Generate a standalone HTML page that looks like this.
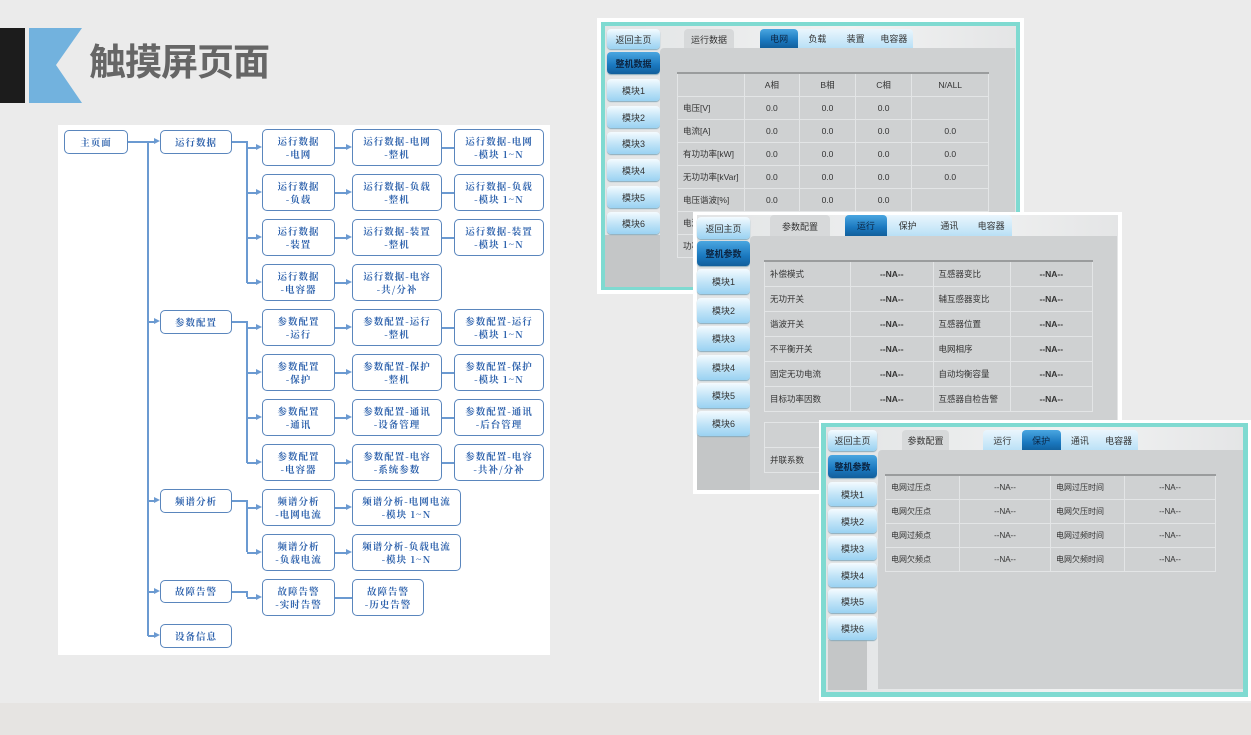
<!DOCTYPE html>
<html><head><meta charset="utf-8"><style>
*{margin:0;padding:0;box-sizing:border-box}
body{width:1251px;height:735px;background:#ebebeb;position:relative;overflow:hidden;font-family:"Liberation Sans","Noto Sans CJK SC",sans-serif}
.a{position:absolute}
.b{position:absolute;border:1.5px solid #5a86bd;border-radius:5px;background:#fff;color:#2f63ad;font-size:9.5px;font-weight:bold;text-align:center;display:flex;align-items:center;justify-content:center;line-height:13px;font-family:"Noto Serif CJK SC","Liberation Serif",serif;letter-spacing:1px}
.h{position:absolute;height:1.5px;background:#6b9ad1}
.v{position:absolute;width:1.5px;background:#6b9ad1}
.ar{position:absolute;width:0;height:0;border-left:6px solid #6b9ad1;border-top:3.5px solid transparent;border-bottom:3.5px solid transparent}
.sb{position:absolute;border-radius:4px;background:linear-gradient(#f4fbff,#bfe3f7 55%,#9ad2f2);color:#333;font-size:9px;display:flex;align-items:center;justify-content:center;box-shadow:0 1px 1px #8ab}
.dk{background:linear-gradient(#4aa6e0,#1a78bf 60%,#125f9c);color:#0c2440;font-weight:bold}
.tb{position:absolute;background:#d7d9da;border-radius:4px 4px 0 0;color:#333;font-size:9px;display:flex;align-items:center;justify-content:center}
.tg{position:absolute;display:flex;border-radius:4px 4px 0 0;background:linear-gradient(#eaf6fd,#b9e0f6)}
.tg span{flex:1;display:flex;align-items:center;justify-content:center;font-size:9px;color:#333}
.tg span.on{background:linear-gradient(#4aa6e0,#1a78bf 60%,#125f9c);color:#0c2440;border-radius:4px 4px 0 0}
table{position:absolute;border-collapse:collapse;font-size:8.5px;color:#333}
td{border:1.5px solid #e3e5e6;padding:0 5px;white-space:nowrap}
td.c{text-align:center}
</style></head><body>
<div class="a" style="left:0;top:703px;width:1251px;height:32px;background:#e6e4e2"></div>
<div class="a" style="left:0;top:28px;width:25px;height:75px;background:#1c1c1c"></div>
<svg class="a" style="left:29px;top:28px" width="60" height="75"><polygon points="0,0 53,0 27,37 53,75 0,75" fill="#72b2de"/></svg>
<div class="a" style="left:89px;top:40px;font-size:37px;font-weight:bold;color:#666;letter-spacing:-1px;line-height:46px">触摸屏页面</div>

<div class="a" style="left:58px;top:125px;width:492px;height:530px;background:#fff"></div>
<div class="b" style="left:64px;top:130px;width:64px;height:24px">主页面</div>
<div class="h" style="left:128px;top:141px;width:20px"></div>
<div class="v" style="left:147px;top:141px;height:495px"></div>
<div class="b" style="left:160px;top:130px;width:72px;height:24px">运行数据</div>
<div class="b" style="left:160px;top:310px;width:72px;height:24px">参数配置</div>
<div class="b" style="left:160px;top:489px;width:72px;height:24px">频谱分析</div>
<div class="b" style="left:160px;top:580px;width:72px;height:23px">故障告警</div>
<div class="b" style="left:160px;top:624px;width:72px;height:24px">设备信息</div>
<div class="h" style="left:148px;top:141px;width:8px"></div><div class="ar" style="left:154px;top:138px"></div>
<div class="h" style="left:148px;top:321px;width:8px"></div><div class="ar" style="left:154px;top:318px"></div>
<div class="h" style="left:148px;top:500px;width:8px"></div><div class="ar" style="left:154px;top:497px"></div>
<div class="h" style="left:148px;top:591px;width:8px"></div><div class="ar" style="left:154px;top:588px"></div>
<div class="h" style="left:148px;top:635px;width:8px"></div><div class="ar" style="left:154px;top:632px"></div>
<div class="h" style="left:232px;top:141px;width:16px"></div><div class="v" style="left:246px;top:141px;height:142px"></div>
<div class="h" style="left:232px;top:321px;width:16px"></div><div class="v" style="left:246px;top:321px;height:142px"></div>
<div class="h" style="left:232px;top:500px;width:16px"></div><div class="v" style="left:246px;top:500px;height:52px"></div>
<div class="h" style="left:232px;top:591px;width:16px"></div><div class="v" style="left:246px;top:591px;height:6px"></div>

<div class="h" style="left:247px;top:147px;width:10px"></div><div class="ar" style="left:256px;top:144px"></div>
<div class="b" style="left:262px;top:129px;width:73px;height:37px">运行数据<br>-电网</div>
<div class="h" style="left:335px;top:147px;width:12px"></div><div class="ar" style="left:346px;top:144px"></div>
<div class="b" style="left:352px;top:129px;width:90px;height:37px">运行数据-电网<br>-整机</div>
<div class="h" style="left:442px;top:147px;width:12px"></div>
<div class="b" style="left:454px;top:129px;width:90px;height:37px">运行数据-电网<br>-模块 1~N</div>

<div class="h" style="left:247px;top:192px;width:10px"></div><div class="ar" style="left:256px;top:189px"></div>
<div class="b" style="left:262px;top:174px;width:73px;height:37px">运行数据<br>-负载</div>
<div class="h" style="left:335px;top:192px;width:12px"></div><div class="ar" style="left:346px;top:189px"></div>
<div class="b" style="left:352px;top:174px;width:90px;height:37px">运行数据-负载<br>-整机</div>
<div class="h" style="left:442px;top:192px;width:12px"></div>
<div class="b" style="left:454px;top:174px;width:90px;height:37px">运行数据-负载<br>-模块 1~N</div>

<div class="h" style="left:247px;top:237px;width:10px"></div><div class="ar" style="left:256px;top:234px"></div>
<div class="b" style="left:262px;top:219px;width:73px;height:37px">运行数据<br>-装置</div>
<div class="h" style="left:335px;top:237px;width:12px"></div><div class="ar" style="left:346px;top:234px"></div>
<div class="b" style="left:352px;top:219px;width:90px;height:37px">运行数据-装置<br>-整机</div>
<div class="h" style="left:442px;top:237px;width:12px"></div>
<div class="b" style="left:454px;top:219px;width:90px;height:37px">运行数据-装置<br>-模块 1~N</div>

<div class="h" style="left:247px;top:282px;width:10px"></div><div class="ar" style="left:256px;top:279px"></div>
<div class="b" style="left:262px;top:264px;width:73px;height:37px">运行数据<br>-电容器</div>
<div class="h" style="left:335px;top:282px;width:12px"></div><div class="ar" style="left:346px;top:279px"></div>
<div class="b" style="left:352px;top:264px;width:90px;height:37px">运行数据-电容<br>-共/分补</div>

<div class="h" style="left:247px;top:327px;width:10px"></div><div class="ar" style="left:256px;top:324px"></div>
<div class="b" style="left:262px;top:309px;width:73px;height:37px">参数配置<br>-运行</div>
<div class="h" style="left:335px;top:327px;width:12px"></div><div class="ar" style="left:346px;top:324px"></div>
<div class="b" style="left:352px;top:309px;width:90px;height:37px">参数配置-运行<br>-整机</div>
<div class="h" style="left:442px;top:327px;width:12px"></div>
<div class="b" style="left:454px;top:309px;width:90px;height:37px">参数配置-运行<br>-模块 1~N</div>

<div class="h" style="left:247px;top:372px;width:10px"></div><div class="ar" style="left:256px;top:369px"></div>
<div class="b" style="left:262px;top:354px;width:73px;height:37px">参数配置<br>-保护</div>
<div class="h" style="left:335px;top:372px;width:12px"></div><div class="ar" style="left:346px;top:369px"></div>
<div class="b" style="left:352px;top:354px;width:90px;height:37px">参数配置-保护<br>-整机</div>
<div class="h" style="left:442px;top:372px;width:12px"></div>
<div class="b" style="left:454px;top:354px;width:90px;height:37px">参数配置-保护<br>-模块 1~N</div>

<div class="h" style="left:247px;top:417px;width:10px"></div><div class="ar" style="left:256px;top:414px"></div>
<div class="b" style="left:262px;top:399px;width:73px;height:37px">参数配置<br>-通讯</div>
<div class="h" style="left:335px;top:417px;width:12px"></div><div class="ar" style="left:346px;top:414px"></div>
<div class="b" style="left:352px;top:399px;width:90px;height:37px">参数配置-通讯<br>-设备管理</div>
<div class="h" style="left:442px;top:417px;width:12px"></div>
<div class="b" style="left:454px;top:399px;width:90px;height:37px">参数配置-通讯<br>-后台管理</div>

<div class="h" style="left:247px;top:462px;width:10px"></div><div class="ar" style="left:256px;top:459px"></div>
<div class="b" style="left:262px;top:444px;width:73px;height:37px">参数配置<br>-电容器</div>
<div class="h" style="left:335px;top:462px;width:12px"></div><div class="ar" style="left:346px;top:459px"></div>
<div class="b" style="left:352px;top:444px;width:90px;height:37px">参数配置-电容<br>-系统参数</div>
<div class="h" style="left:442px;top:462px;width:12px"></div>
<div class="b" style="left:454px;top:444px;width:90px;height:37px">参数配置-电容<br>-共补/分补</div>

<div class="h" style="left:247px;top:507px;width:10px"></div><div class="ar" style="left:256px;top:504px"></div>
<div class="b" style="left:262px;top:489px;width:73px;height:37px">频谱分析<br>-电网电流</div>
<div class="h" style="left:335px;top:507px;width:12px"></div><div class="ar" style="left:346px;top:504px"></div>
<div class="b" style="left:352px;top:489px;width:109px;height:37px">频谱分析-电网电流<br>-模块 1~N</div>

<div class="h" style="left:247px;top:552px;width:10px"></div><div class="ar" style="left:256px;top:549px"></div>
<div class="b" style="left:262px;top:534px;width:73px;height:37px">频谱分析<br>-负载电流</div>
<div class="h" style="left:335px;top:552px;width:12px"></div><div class="ar" style="left:346px;top:549px"></div>
<div class="b" style="left:352px;top:534px;width:109px;height:37px">频谱分析-负载电流<br>-模块 1~N</div>

<div class="h" style="left:247px;top:597px;width:10px"></div><div class="ar" style="left:256px;top:594px"></div>
<div class="b" style="left:262px;top:579px;width:73px;height:37px">故障告警<br>-实时告警</div>
<div class="h" style="left:335px;top:597px;width:17px"></div>
<div class="b" style="left:352px;top:579px;width:72px;height:37px">故障告警<br>-历史告警</div>

<!-- SCREEN 1 -->
<div class="a" style="left:597px;top:18px;width:427px;height:276px;background:#fff"></div>
<div class="a" style="left:601px;top:22px;width:419px;height:268px;background:#7fdad1"></div>
<div class="a" style="left:605px;top:26px;width:411px;height:261px;background:linear-gradient(90deg,#e2e4e5,#f2f3f3 60%,#e4e5e6)"></div>
<div class="a" style="left:605px;top:235px;width:55px;height:52px;background:#c4c6c7"></div>
<div class="sb" style="left:607px;top:29px;width:53px;height:20px">返回主页</div>
<div class="sb dk" style="left:607px;top:52px;width:53px;height:22px">整机数据</div>
<div class="sb" style="left:607px;top:79px;width:53px;height:22px">模块1</div>
<div class="sb" style="left:607px;top:106px;width:53px;height:22px">模块2</div>
<div class="sb" style="left:607px;top:132px;width:53px;height:22px">模块3</div>
<div class="sb" style="left:607px;top:159px;width:53px;height:22px">模块4</div>
<div class="sb" style="left:607px;top:186px;width:53px;height:22px">模块5</div>
<div class="sb" style="left:607px;top:212px;width:53px;height:22px">模块6</div>
<div class="tb" style="left:684px;top:29px;width:50px;height:20px">运行数据</div>
<div class="tg" style="left:760px;top:29px;width:153px;height:19px"><span class="on">电网</span><span>负载</span><span>装置</span><span>电容器</span></div>
<div class="a" style="left:660px;top:48px;width:355px;height:239px;background:#cfd1d2;border-radius:4px 0 0 0"></div>
<table style="left:677px;top:72px;width:312px;border-top:2px solid #9a9c9d">
<tr style="height:23px"><td style="width:62px"></td><td class="c">A相</td><td class="c">B相</td><td class="c">C相</td><td class="c">N/ALL</td></tr>
<tr style="height:23px"><td>电压[V]</td><td class="c">0.0</td><td class="c">0.0</td><td class="c">0.0</td><td></td></tr>
<tr style="height:23px"><td>电流[A]</td><td class="c">0.0</td><td class="c">0.0</td><td class="c">0.0</td><td class="c">0.0</td></tr>
<tr style="height:23px"><td>有功功率[kW]</td><td class="c">0.0</td><td class="c">0.0</td><td class="c">0.0</td><td class="c">0.0</td></tr>
<tr style="height:23px"><td>无功功率[kVar]</td><td class="c">0.0</td><td class="c">0.0</td><td class="c">0.0</td><td class="c">0.0</td></tr>
<tr style="height:23px"><td>电压谐波[%]</td><td class="c">0.0</td><td class="c">0.0</td><td class="c">0.0</td><td></td></tr>
<tr style="height:23px"><td>电流</td><td></td><td></td><td></td><td></td></tr>
<tr style="height:23px"><td>功率</td><td></td><td></td><td></td><td></td></tr>
</table>

<!-- SCREEN 2 -->
<div class="a" style="left:693px;top:212px;width:429px;height:282px;background:#fff"></div>
<div class="a" style="left:697px;top:215px;width:421px;height:275px;background:linear-gradient(90deg,#e2e4e5,#f2f3f3 60%,#e4e5e6)"></div>
<div class="a" style="left:697px;top:435px;width:53px;height:55px;background:#c4c6c7"></div>
<div class="sb" style="left:697px;top:217px;width:53px;height:22px">返回主页</div>
<div class="sb dk" style="left:697px;top:241px;width:53px;height:25px">整机参数</div>
<div class="sb" style="left:697px;top:269px;width:53px;height:25px">模块1</div>
<div class="sb" style="left:697px;top:298px;width:53px;height:25px">模块2</div>
<div class="sb" style="left:697px;top:326px;width:53px;height:25px">模块3</div>
<div class="sb" style="left:697px;top:355px;width:53px;height:25px">模块4</div>
<div class="sb" style="left:697px;top:383px;width:53px;height:25px">模块5</div>
<div class="sb" style="left:697px;top:411px;width:53px;height:25px">模块6</div>
<div class="tb" style="left:770px;top:215px;width:60px;height:22px">参数配置</div>
<div class="tg" style="left:845px;top:215px;width:167px;height:21px"><span class="on">运行</span><span>保护</span><span>通讯</span><span>电容器</span></div>
<div class="a" style="left:750px;top:236px;width:367px;height:254px;background:#cfd1d2;border-radius:4px 0 0 0"></div>
<table style="left:764px;top:260px;width:329px;border-top:2px solid #9a9c9d">
<tr style="height:25px"><td style="width:86px">补偿模式</td><td class="c"><b>--NA--</b></td><td style="width:77px">互感器变比</td><td class="c"><b>--NA--</b></td></tr>
<tr style="height:25px"><td>无功开关</td><td class="c"><b>--NA--</b></td><td>辅互感器变比</td><td class="c"><b>--NA--</b></td></tr>
<tr style="height:25px"><td>谐波开关</td><td class="c"><b>--NA--</b></td><td>互感器位置</td><td class="c"><b>--NA--</b></td></tr>
<tr style="height:25px"><td>不平衡开关</td><td class="c"><b>--NA--</b></td><td>电网相序</td><td class="c"><b>--NA--</b></td></tr>
<tr style="height:25px"><td>固定无功电流</td><td class="c"><b>--NA--</b></td><td>自动均衡容量</td><td class="c"><b>--NA--</b></td></tr>
<tr style="height:25px"><td>目标功率因数</td><td class="c"><b>--NA--</b></td><td>互感器自检告警</td><td class="c"><b>--NA--</b></td></tr>
</table>
<table style="left:764px;top:422px;width:80px">
<tr style="height:25px"><td></td></tr>
<tr style="height:25px"><td>并联系数</td></tr>
</table>

<!-- SCREEN 3 -->
<div class="a" style="left:819px;top:420px;width:432px;height:281px;background:#fff"></div>
<div class="a" style="left:821px;top:423px;width:427px;height:274px;background:#7fdad1"></div>
<div class="a" style="left:826px;top:427px;width:417px;height:265px;background:linear-gradient(90deg,#e2e4e5,#f2f3f3 60%,#e4e5e6)"></div>
<div class="a" style="left:828px;top:640px;width:39px;height:50px;background:#c4c6c7"></div>
<div class="sb" style="left:828px;top:430px;width:49px;height:21px">返回主页</div>
<div class="sb dk" style="left:828px;top:455px;width:49px;height:23px">整机参数</div>
<div class="sb" style="left:828px;top:482px;width:49px;height:24px">模块1</div>
<div class="sb" style="left:828px;top:509px;width:49px;height:24px">模块2</div>
<div class="sb" style="left:828px;top:536px;width:49px;height:24px">模块3</div>
<div class="sb" style="left:828px;top:563px;width:49px;height:24px">模块4</div>
<div class="sb" style="left:828px;top:589px;width:49px;height:24px">模块5</div>
<div class="sb" style="left:828px;top:616px;width:49px;height:24px">模块6</div>
<div class="tb" style="left:902px;top:430px;width:47px;height:21px">参数配置</div>
<div class="tg" style="left:983px;top:430px;width:155px;height:21px"><span>运行</span><span class="on">保护</span><span>通讯</span><span>电容器</span></div>
<div class="a" style="left:878px;top:450px;width:365px;height:239px;background:#cfd1d2;border-radius:4px 0 0 0"></div>
<table style="left:885px;top:474px;width:331px;border-top:2px solid #9a9c9d;font-size:8px">
<tr style="height:24px"><td style="width:74px">电网过压点</td><td class="c">--NA--</td><td style="width:74px">电网过压时间</td><td class="c">--NA--</td></tr>
<tr style="height:24px"><td>电网欠压点</td><td class="c">--NA--</td><td>电网欠压时间</td><td class="c">--NA--</td></tr>
<tr style="height:24px"><td>电网过频点</td><td class="c">--NA--</td><td>电网过频时间</td><td class="c">--NA--</td></tr>
<tr style="height:24px"><td>电网欠频点</td><td class="c">--NA--</td><td>电网欠频时间</td><td class="c">--NA--</td></tr>
</table>
</body></html>
